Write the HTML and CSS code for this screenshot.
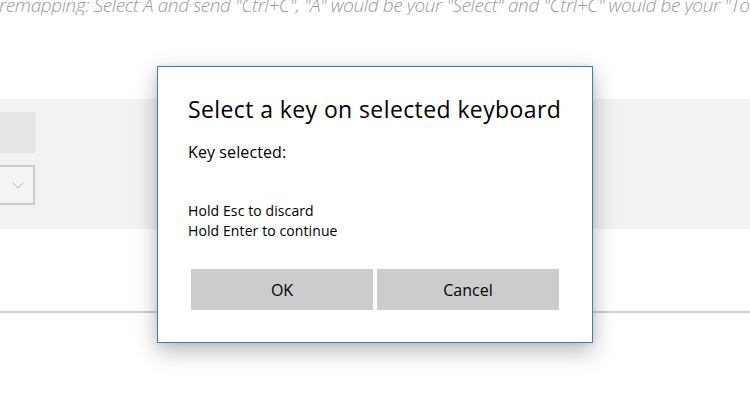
FILE: index.html
```html
<!DOCTYPE html>
<html lang="en">
<head>
<meta charset="utf-8">
<title>Select a key</title>
<link rel="stylesheet" href="styles.css">
</head>
<body>
<div class="page">
  <p class="hint">remapping: Select A and send "Ctrl+C", "A" would be your "Select" and "Ctrl+C" would be your "To Send". This is the key</p>
  <section class="panel">
    <div class="keybox"></div>
    <div class="dropdown">
      <svg class="chev" width="12" height="7" viewBox="0 0 12 7"><path d="M0.5 0.5 L6 6 L11.5 0.5" fill="none" stroke="#b8b8b8" stroke-width="1"/></svg>
    </div>
  </section>
  <hr class="divider">
</div>
<div class="dialog">
  <h1 class="title">Select a key on selected keyboard</h1>
  <p class="selected">Key selected:</p>
  <p class="help">Hold Esc to discard<br>Hold Enter to continue</p>
  <div class="actions">
    <button class="btn">OK</button>
    <button class="btn">Cancel</button>
  </div>
</div>
</body>
</html>
```
FILE: styles.css
```css
html, body {
  margin: 0;
  padding: 0;
  background: #ffffff;
}
body {
  width: 750px;
  height: 400px;
  overflow: hidden;
  position: relative;
  font-family: "Open Sans", "Noto Sans", sans-serif;
}
.page {
  display: flex;
  flex-direction: column;
}
.hint {
  margin: -4px 0 0 -1px;
  font-size: 19px;
  line-height: 19px;
  font-style: italic;
  font-weight: 300;
  color: #9a9a9a;
  white-space: nowrap;
  overflow: hidden;
  letter-spacing: -0.4px;
}
.panel {
  margin-top: 84px;
  height: 130px;
  background: #f2f2f2;
  padding-top: 13px;
  box-sizing: border-box;
  display: flex;
  flex-direction: column;
  gap: 12px;
}
.keybox {
  width: 35px;
  height: 41px;
  background: #e5e5e5;
}
.dropdown {
  width: 35px;
  height: 40px;
  box-sizing: border-box;
  border: 2px solid #cccccc;
  border-left: none;
  background: #f4f4f4;
  display: flex;
  align-items: center;
  justify-content: flex-end;
  padding-right: 9px;
}
.divider {
  margin: 82px 0 0 0;
  border: none;
  height: 2px;
  background: #d0d0d0;
}
.dialog {
  position: absolute;
  left: 157px;
  top: 66px;
  width: 436px;
  height: 277px;
  box-sizing: border-box;
  background: #ffffff;
  border: 1px solid #3a7bb8;
  box-shadow: 0 8px 22px rgba(0, 0, 0, 0.28), 0 0 6px rgba(0, 0, 0, 0.08);
  padding: 27px 33px 0 30px;
  color: #000000;
}
.title {
  margin: 0;
  font-size: 23px;
  line-height: 30px;
  font-weight: 400;
  letter-spacing: 0.4px;
  white-space: nowrap;
}
.selected {
  margin: 16px 0 0 0;
  font-size: 16px;
  line-height: 24px;
  letter-spacing: 0.1px;
}
.help {
  margin: 37px 0 0 0;
  font-size: 14px;
  line-height: 20px;
  letter-spacing: 0.1px;
}
.actions {
  margin: 28px 0 0 3px;
  display: flex;
  gap: 4px;
}
.btn {
  flex: 1;
  height: 41px;
  border: none;
  background: #cccccc;
  font-family: "Open Sans", "Noto Sans", sans-serif;
  font-size: 16px;
  color: #000000;
  padding: 0;
}
```
